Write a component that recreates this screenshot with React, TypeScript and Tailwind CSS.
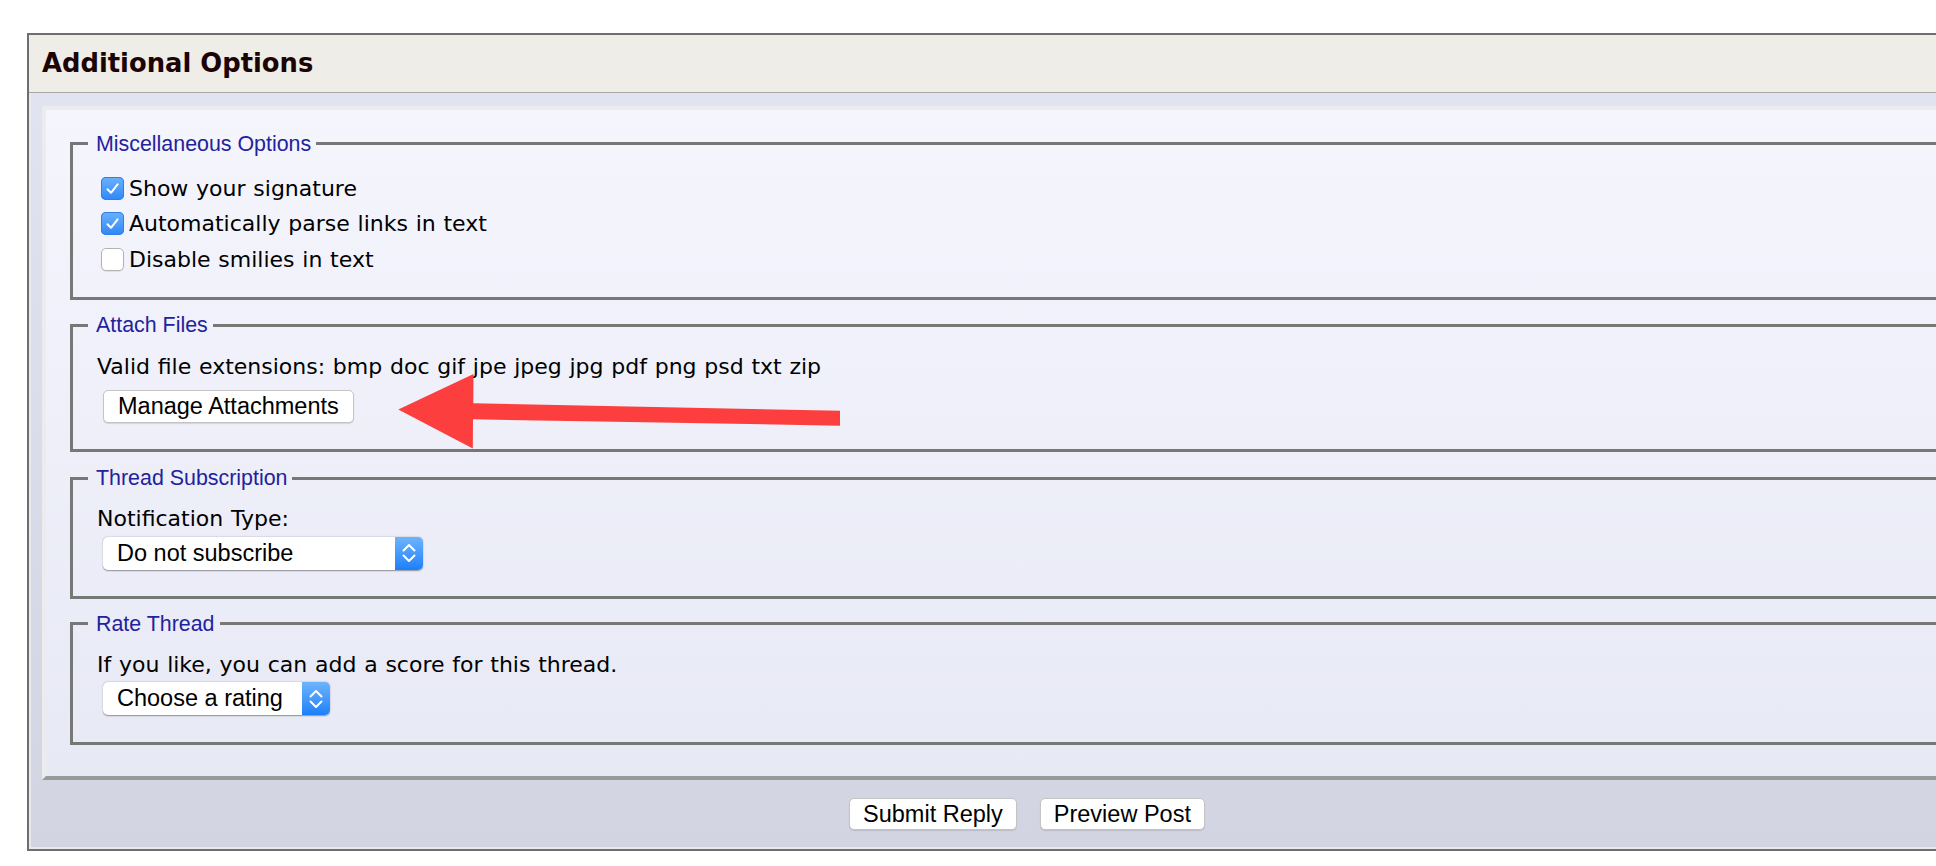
import React from "react";

function Check({ checked }: { checked: boolean }) {
  if (checked) {
    return (
      <span className="ml-[4px] mr-[5px] flex h-[23px] w-[23px] shrink-0 items-center justify-center rounded-[5px] bg-linear-to-b from-[#6ab2fc] to-[#2e86f9] shadow-[inset_0_0_0_1px_#2f7fe4]">
        <svg width="23" height="23" viewBox="0 0 23 23">
          <path d="M6.5 12.2 L10 15.8 L16.6 7.4" fill="none" stroke="#ffffff" strokeWidth="2" strokeLinecap="round" strokeLinejoin="round" />
        </svg>
      </span>
    );
  }
  return (
    <span className="ml-[4px] mr-[5px] h-[23px] w-[23px] shrink-0 rounded-[5px] border border-[#b3b3b3] bg-white shadow-[0_1px_1px_rgba(0,0,0,0.08)]" />
  );
}

function Row({ checked, label }: { checked: boolean; label: string }) {
  return (
    <div className="flex h-[35.5px] items-center leading-[35.5px]">
      <Check checked={checked} />
      <span>{label}</span>
    </div>
  );
}

function Stepper() {
  return (
    <span className="flex w-[28px] items-center justify-center rounded-r-[5px] bg-linear-to-b from-[#6cb4fc] to-[#1a7ffa]">
      <svg width="16" height="26" viewBox="0 0 16 26">
        <path d="M2.5 10.5 L8 5 L13.5 10.5" fill="none" stroke="#ffffff" strokeWidth="2" strokeLinecap="round" strokeLinejoin="round" />
        <path d="M2.5 15.5 L8 21 L13.5 15.5" fill="none" stroke="#ffffff" strokeWidth="2" strokeLinecap="round" strokeLinejoin="round" />
      </svg>
    </span>
  );
}

function Select({ label, className }: { label: string; className: string }) {
  return (
    <div className={`ml-[6px] flex h-[33px] items-stretch rounded-[5px] bg-white shadow-[0_0.5px_1.5px_rgba(0,0,0,0.4)] ${className}`}>
      <span className="flex-1 pl-[14px] font-['Liberation_Sans',Arial,sans-serif] text-[23.5px] leading-[33px] text-black [word-spacing:0px]">{label}</span>
      <Stepper />
    </div>
  );
}

function Fs({ title, className, children }: { title: string; className: string; children: React.ReactNode }) {
  return (
    <fieldset className={`border-[3px] border-[#777777] pl-[24px] ${className}`}>
      <legend className="-ml-[9px] pl-[8px] pr-[5px] font-['Liberation_Sans',Arial,sans-serif] text-[21.4px] leading-[24px] text-[#22229c] [word-spacing:0px]">
        {title}
      </legend>
      {children}
    </fieldset>
  );
}

const btn =
  "rounded-[5px] border border-[#c4c4c4] bg-white font-['Liberation_Sans',Arial,sans-serif] text-[23.5px] text-black shadow-[0_1px_1px_rgba(0,0,0,0.12)] [word-spacing:0px]";

export default function App() {
  return (
    <div className="relative h-[866px] w-[1936px] overflow-hidden bg-white font-['DejaVu_Sans',Verdana,sans-serif] text-[22px] text-black [word-spacing:0.75px]">
      <div className="ml-[27px] mt-[33px] w-[1998px] border-2 border-[#6e6e6e]">
        <div className="flex h-[58px] items-center border-b border-[#a8a8a8] bg-[#eeede8] pl-[13px] text-[25.8px] font-bold text-[#1c0404] [word-spacing:0px]">
          Additional Options
        </div>
        <div className="border-b-2 border-l-2 border-[#e8e9ef] bg-linear-to-b from-[#e1e4f0] to-[#d2d5e1] px-[11px] pt-[13px]">
          <div className="border-4 border-b-[#9a9a9a] border-l-[#ececec] border-r-[#9a9a9a] border-t-[#ececec] bg-linear-to-b from-[#f5f5fd] to-[#e7e9f5] px-[24px] pb-[31px] pt-[21.5px]">
            <Fs title="Miscellaneous Options" className="pb-[20px] pt-[15px]">
              <Row checked={true} label="Show your signature" />
              <Row checked={true} label="Automatically parse links in text" />
              <Row checked={false} label="Disable smilies in text" />
            </Fs>
            <Fs title="Attach Files" className="mt-[13px] pb-[26px] pt-[16px]">
              <div className="leading-[28px]">Valid file extensions: bmp doc gif jpe jpeg jpg pdf png psd txt zip</div>
              <button className={`ml-[6px] mt-[9px] block h-[33px] px-[14px] leading-[31px] ${btn}`}>
                Manage Attachments
              </button>
            </Fs>
            <Fs title="Thread Subscription" className="mt-[14px] pb-[26px] pt-[15px]">
              <div className="leading-[28px]">Notification Type:</div>
              <div className="mt-[3.5px]">
                <Select label="Do not subscribe" className="w-[320px]" />
              </div>
            </Fs>
            <Fs title="Rate Thread" className="mt-[13px] pb-[27px] pt-[15px]">
              <div className="leading-[28px]">If you like, you can add a score for this thread.</div>
              <div className="mt-[3.5px]">
                <Select label="Choose a rating" className="w-[227px]" />
              </div>
            </Fs>
          </div>
          <div className="flex h-[67px] items-center justify-center gap-[23px]">
            <button className={`h-[32px] px-[13px] leading-[30px] ${btn}`}>Submit Reply</button>
            <button className={`h-[32px] px-[13px] leading-[30px] ${btn}`}>Preview Post</button>
          </div>
        </div>
      </div>
      <svg
        className="pointer-events-none absolute left-[396px] top-[372px]"
        width="446"
        height="78"
        viewBox="396 372 446 78"
      >
        <polygon
          points="398.3,409.5 473.5,374 473.3,403.3 840,410.7 840,425.7 473,419.3 472.8,448.5"
          fill="#fc3e3e"
        />
      </svg>
    </div>
  );
}
